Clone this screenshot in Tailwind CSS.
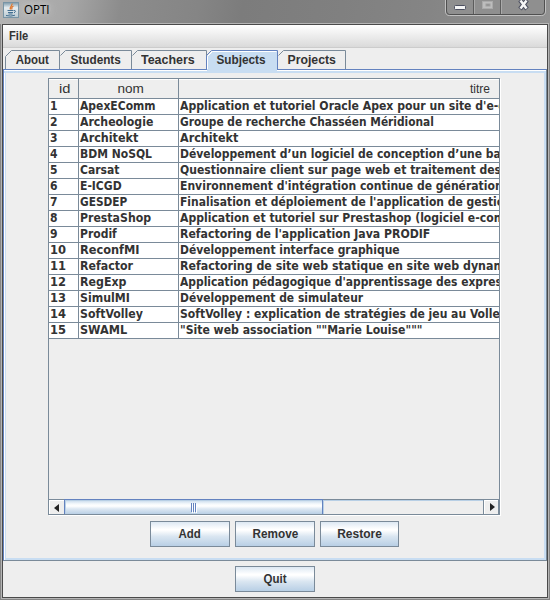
<!DOCTYPE html>
<html lang="fr"><head><meta charset="utf-8"><title>OPTI</title>
<script src="https://cdn.jsdelivr.net/npm/@tailwindcss/browser@4"></script></head>
<body class="w-[550px] h-[600px] overflow-hidden bg-[#858585] text-[#333] text-[12px] font-['Liberation_Sans',sans-serif]">
<div class="relative w-[550px] h-[600px] flex flex-col overflow-hidden">
 <header class="h-[24px] shrink-0 flex justify-between bg-[linear-gradient(100deg,#b4b4b4_0%,#a8a8a8_12%,#8c8c8c_22%,#858585_36%,#7c7c7c_44%,#808080_62%,#858585_78%,#929292_100%)]">
  <div class="flex pl-[3px] pt-[2px]">
   <svg width="16" height="16" viewBox="0 0 16 16"><defs><linearGradient id="j" x2="0" y2="1"><stop stop-color="#7b98a9"/><stop offset=".35" stop-color="#e6edf0"/><stop offset="1" stop-color="#b9c8d0"/></linearGradient></defs><rect x=".5" y=".5" width="15" height="15" fill="url(#j)" stroke="#7894a5"/><path d="M9 1.500C10 3.500 6 4.500 7.500 7.500M10.500 4C8 5 8.500 6 9 7.500" fill="none" stroke="#e2762b" stroke-width="1.200"/><path d="M4.500 8.500h6M5 10.500h5M5.500 12h4M3 13.500q5 1.300 9-.3M11 8.500q3 0 0 2.500" fill="none" stroke="#446f91"/></svg>
   <span class="ml-[5px] -mt-px leading-[18px] text-black [text-shadow:0_0_6px_#ddd,0_0_10px_#ccc] whitespace-nowrap"><span data-w="26" class="inline-block origin-left font-['Open_Sans',sans-serif]">OPTI</span></span>
  </div>
  <svg class="mr-[1px]" width="106" height="16" viewBox="0 0 106 16"><path d="M2.500 0v11q0 4.500 4 4.500h92q4 0 4-4.500V0" fill="none" stroke="#c1c1c1"/><path d="M3.500 0v11q0 3.500 3 3.500h92q3 0 3-3.500V0" fill="#8f8f8f" stroke="#505050"/><path d="M30.500 0v14M57.500 0v14" stroke="#5c5c5c"/><path d="M31.500 0v14M58.500 0v14" stroke="#aaa"/><rect x="11.500" y="5.500" width="11" height="4" rx="1" fill="#f4f4f4" stroke="#4d5060"/><rect x="39.500" y="1.500" width="10" height="7" fill="#bdbdbd" stroke="#aaa"/><rect x="43" y="4" width="4" height="2" fill="#8b8b8b" stroke="#a0a0a0"/><path d="M77 0l7 9M84 0l-7 9" stroke="#4d5060" stroke-width="4.500"/><path d="M77.500 .5l6 8M83.500 .5l-6 8" stroke="#f6f6f6" stroke-width="2.500"/></svg>
 </header>
 <main class="h-[574px] ml-[2px] w-[546px] shrink-0 flex flex-col bg-[#eee] border border-[#4a4a4a] outline outline-[#b5b5b5]">
  <nav class="h-[23px] shrink-0 bg-linear-to-b from-white to-[#dadada] border-b border-[#ccc] pl-[6px] leading-[22px] font-bold"><span class="inline-block origin-left" data-w="19.5">File</span></nav>
  <div class="h-[21px] shrink-0 flex items-end relative pl-[2px] leading-[18px] font-bold">
   <svg class="absolute left-0 top-[2px]" width="344" height="20" viewBox="0 0 344 20" fill="none" stroke="#7a8a99"><path d="M2.500 20V6.500l6-6h48V20M57.500 5.500l5-5h66V20M129.500 5.500l5-5h69V20M275.500 5.500l5-5h62V20"/><path d="M204 21V6l6-5h64v20z" fill="#c8ddf2" stroke="none"/><path d="M203.500 20V5.500l5-5h66V20" stroke="#6382bf"/><path d="M204.500 20V6.500l5-5h64" stroke="#fff"/></svg>
   <div class="relative w-[55px] text-center"><span class="inline-block" data-w="33.5">About</span></div>
   <div class="relative w-[71px] text-center"><span class="inline-block" data-w="50">Students</span></div>
   <div class="relative w-[74px] text-center"><span class="inline-block" data-w="54">Teachers</span></div>
   <div class="relative w-[73px] text-center"><span class="inline-block" data-w="49">Subjects</span></div>
   <div class="relative w-[68px] text-center"><span class="inline-block" data-w="48">Projects</span></div>
  </div>
  <section class="relative h-[492px] shrink-0 border border-[#7a8a99] border-t-[#6382bf] border-l-[#6382bf] flex flex-col shadow-[inset_1px_1px_#fff,inset_0_0_0_2px_#c8ddf2]">
   <div class="absolute left-0 top-0 w-[542px] h-px bg-white"></div><div class="absolute left-0 top-px w-[542px] h-[2px] bg-[#c8ddf2]"></div><div class="absolute left-[203px] -top-px w-[70px] h-[2px] bg-[#c8ddf2]"></div>
   <div class="ml-[44px] mt-[8px] w-[452px] h-[437px] shrink-0 border border-[#7a8a99] shadow-[1px_1px_#fff] flex flex-col">
    <div class="h-[420px] overflow-hidden">
     <div class="grid grid-cols-[30px_100px_320px] h-[20px] border-b border-[#7a8a99] leading-[21px] text-center shadow-[inset_0_1px_#fff] whitespace-nowrap">
      <div class="border-r border-[#7a8a99] pl-[2px]"><span class="inline-block" data-w="11">id</span></div><div class="border-r border-[#7a8a99] pl-[4px]"><span class="inline-block" data-w="26">nom</span></div><div class="text-right pr-[9px]"><span class="inline-block origin-right" data-w="20">titre</span></div>
     </div>
     <div id="rows" class="font-['DejaVu_Sans_Condensed','DejaVu_Sans',sans-serif] font-bold"></div>
    </div>
    <div class="h-[15px] shrink-0 border-t border-[#7a8a99] flex box-border">
     <div class="w-[15px] border-t border-l border-white flex items-center"><svg class="ml-[4px]" width="5" height="8"><path d="M5 0v8L0 4z" fill="#222"/></svg></div>
     <div class="relative -mt-px w-[259px] h-[15px] border-x border-t border-[#6382bf] bg-[linear-gradient(#c4d7ea_0px,#f5f9fc_4px,#fff_6px,#dce7f2_9px,#b9cfe5_100%)] shadow-[inset_1px_1px_#b8cfe5]"><div class="flex gap-px absolute left-[126px] top-[3px]"><i class="w-px h-[9px] bg-[#6382bf] shadow-[1px_1px_#fff]"></i><i class="w-px h-[9px] bg-[#6382bf] shadow-[1px_1px_#fff]"></i><i class="w-px h-[9px] bg-[#6382bf] shadow-[1px_1px_#fff]"></i></div></div>
     <div class="flex-1 border-t border-l border-[#b8cfe5]"></div>
     <div class="w-[16px] border-l border-r border-[#7a8a99] shadow-[inset_1px_1px_#fff] flex items-center"><svg class="ml-[6px]" width="5" height="8"><path d="M0 0v8l5-4z" fill="#222"/></svg></div>
    </div>
   </div>
   <div class="ml-[146px] mt-[6px] flex gap-[5px] font-bold text-center leading-[25px]">
    <div class="w-[80px] h-[26px] border border-[#7a8a99] bg-[linear-gradient(#dde8f3_0%,#fff_30%,#fff_34%,#dae6f1_60%,#b8cfe5_100%)]"><span class="inline-block" data-w="22">Add</span></div>
    <div class="w-[80px] h-[26px] border border-[#7a8a99] bg-[linear-gradient(#dde8f3_0%,#fff_30%,#fff_34%,#dae6f1_60%,#b8cfe5_100%)]"><span class="inline-block" data-w="46">Remove</span></div>
    <div class="w-[79px] h-[26px] border border-[#7a8a99] bg-[linear-gradient(#dde8f3_0%,#fff_30%,#fff_34%,#dae6f1_60%,#b8cfe5_100%)]"><span class="inline-block" data-w="45">Restore</span></div>
   </div>
  </section>
  <div class="ml-[232px] mt-[5px] w-[80px] h-[26px] shrink-0 border border-[#7a8a99] bg-[linear-gradient(#dde8f3_0%,#fff_30%,#fff_34%,#dae6f1_60%,#b8cfe5_100%)] font-bold text-center leading-[25px]"><span class="inline-block" data-w="23">Quit</span></div>
 </main>
</div>
<script>
const rows=[
["ApexEComm",76,"Application et tutoriel Oracle Apex pour un site d'e-c",325],
["Archeologie",73,"Groupe de recherche Chasséen Méridional",254],
["Architekt",58,"Architekt",58],
["BDM NoSQL",72,"Développement d’un logiciel de conception d’une ba",321],
["Carsat",39,"Questionnaire client sur page web et traitement des",321],
["E-ICGD",42,"Environnement d'intégration continue de génération",323],
["GESDEP",47,"Finalisation et déploiement de l'application de gestio",324],
["PrestaShop",71,"Application et tutoriel sur Prestashop (logiciel e-com",325],
["Prodif",37,"Refactoring de l'application Java PRODIF",250],
["ReconfMI",60,"Développement interface graphique",220],
["Refactor",53,"Refactoring de site web statique en site web dynam",325],
["RegExp",46,"Application pédagogique d'apprentissage des expres",322],
["SimulMI",50,"Développement de simulateur",183],
["SoftVolley",63,"SoftVolley : explication de stratégies de jeu au Volle",320],
["SWAML",47,"\"Site web association \"\"Marie Louise\"\"\"",242]];
document.getElementById('rows').innerHTML=rows.map((r,i)=>`<div class="grid grid-cols-[30px_100px_320px] h-[16px] bg-white border-b border-[#7a8a99] leading-[15px] whitespace-nowrap"><div class="border-r border-[#7a8a99] pl-px"><span class="inline-block origin-left" data-w="${i<9?8:16}">${i+1}</span></div><div class="border-r border-[#7a8a99] pl-px"><span class="inline-block origin-left" data-w="${r[1]}">${r[0]}</span></div><div class="pl-px overflow-hidden h-[15px]"><span class="inline-block origin-left" data-w="${r[3]}">${r[2]}</span></div></div>`).join('');
// Fit each label to its nominal width
const fit=()=>document.querySelectorAll('[data-w]').forEach(e=>{e.style.transform='scaleX('+(+e.dataset.w/e.offsetWidth)+')'});
fit();addEventListener('load',fit);
</script>
</body></html>
